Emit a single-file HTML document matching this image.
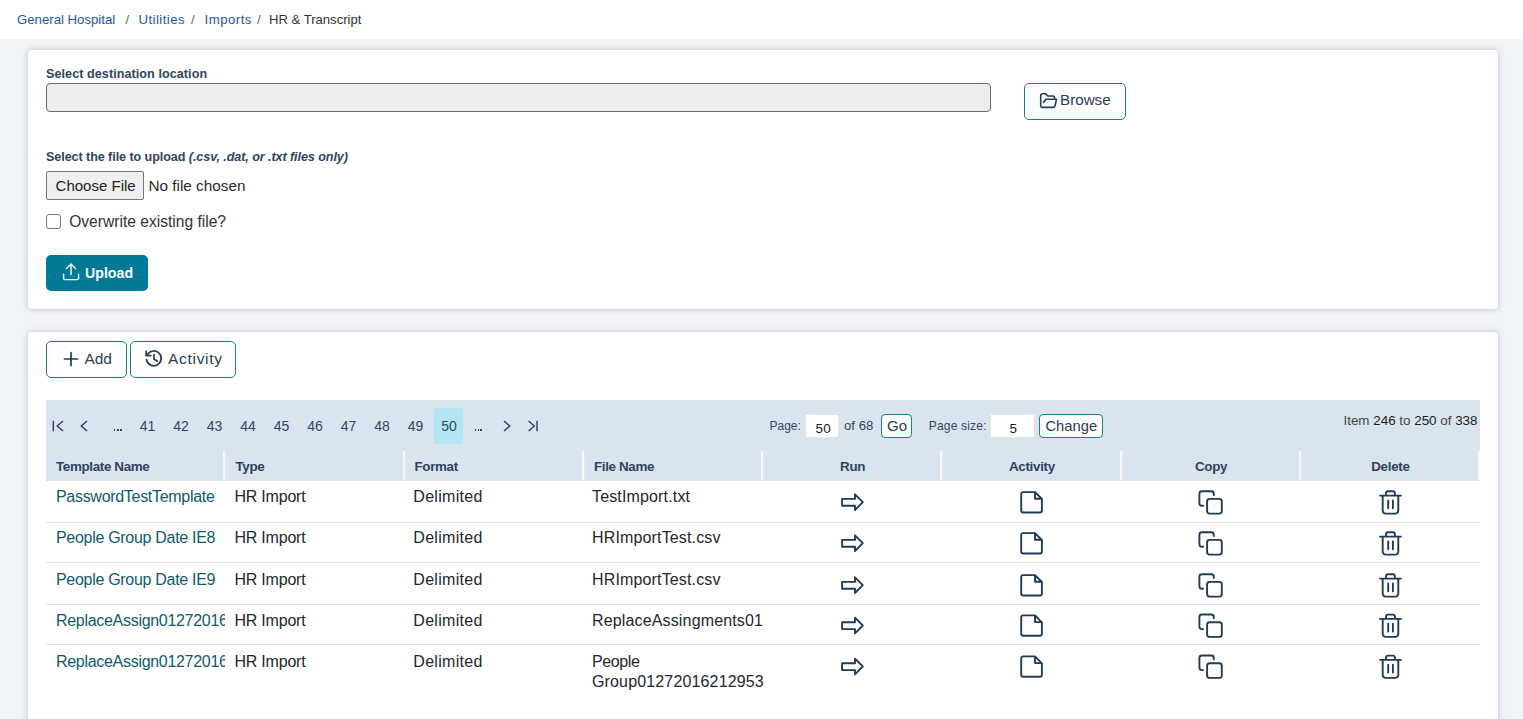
<!DOCTYPE html>
<html><head><meta charset="utf-8">
<style>
*{box-sizing:border-box;margin:0;padding:0}
html,body{width:1523px;height:719px;overflow:hidden;background:#f0f4f9;font-family:"Liberation Sans",sans-serif;color:#333}
.a{position:absolute}
.t{position:absolute;white-space:nowrap}
svg.ov{position:absolute;left:0;top:0;width:1523px;height:719px;overflow:visible}
</style></head><body>
<div class="a" style="left:0px;top:0px;width:1523px;height:39px;background:#fff"></div>
<div class="t" style="left:17px;top:11.51px;font-size:13.2px;line-height:15.84px;color:#1b58a2;font-weight:normal;font-style:normal;">General Hospital</div>
<div class="t" style="left:125.5px;top:11.51px;font-size:13.2px;line-height:15.84px;color:#666;font-weight:normal;font-style:normal;">/</div>
<div class="t" style="left:138.5px;top:11.51px;font-size:13.2px;line-height:15.84px;color:#1b58a2;font-weight:normal;font-style:normal;letter-spacing:0.45px">Utilities</div>
<div class="t" style="left:191px;top:11.51px;font-size:13.2px;line-height:15.84px;color:#666;font-weight:normal;font-style:normal;">/</div>
<div class="t" style="left:204.5px;top:11.51px;font-size:13.2px;line-height:15.84px;color:#1b58a2;font-weight:normal;font-style:normal;letter-spacing:0.5px">Imports</div>
<div class="t" style="left:257px;top:11.51px;font-size:13.2px;line-height:15.84px;color:#666;font-weight:normal;font-style:normal;">/</div>
<div class="t" style="left:269px;top:11.60px;font-size:13.1px;line-height:15.72px;color:#333;font-weight:normal;font-style:normal;">HR &amp; Transcript</div>
<div class="a" style="left:28px;top:50px;width:1470px;height:259px;background:#fff;border-radius:4px;box-shadow:0 0 6px rgba(0,0,0,.22)"></div>
<div class="t" style="left:46px;top:67.07px;font-size:12.6px;line-height:15.12px;color:#30465f;font-weight:bold;font-style:normal;letter-spacing:0.06px">Select destination location</div>
<div class="a" style="left:46px;top:83px;width:945px;height:29px;background:#ededed;border:1px solid #5f6f84;border-radius:4px"></div>
<div class="a" style="left:1024px;top:83px;width:102px;height:37px;background:#fff;border:1.3px solid #1b7d96;border-radius:5px"></div>
<div class="t" style="left:1060px;top:91.21px;font-size:15.2px;line-height:18.24px;color:#2c3d57;font-weight:normal;font-style:normal;">Browse</div>
<div class="t" style="left:46px;top:150.07px;font-size:12.6px;line-height:15.12px;color:#30465f;font-weight:bold;font-style:normal;letter-spacing:-0.08px">Select the file to upload <i>(.csv, .dat, or .txt files only)</i></div>
<div class="a" style="left:46px;top:171px;width:98px;height:29px;background:#efefef;border:1px solid #767676;border-radius:2px"></div>
<div class="t" style="left:55.6px;top:176.80px;font-size:15px;line-height:18.0px;color:#222;font-weight:normal;font-style:normal;">Choose File</div>
<div class="t" style="left:148.5px;top:176.52px;font-size:15.3px;line-height:18.36px;color:#2a2a2a;font-weight:normal;font-style:normal;">No file chosen</div>
<div class="a" style="left:46px;top:214px;width:15px;height:15px;background:#fff;border:1.2px solid #777;border-radius:3px"></div>
<div class="t" style="left:69.2px;top:213.23px;font-size:15.6px;line-height:18.72px;color:#333;font-weight:normal;font-style:normal;">Overwrite existing file?</div>
<div class="a" style="left:46px;top:255px;width:102px;height:36px;background:#027a97;border-radius:5px"></div>
<div class="t" style="left:85px;top:264.56px;font-size:14.2px;line-height:17.04px;color:#fff;font-weight:bold;font-style:normal;">Upload</div>
<div class="a" style="left:28px;top:332px;width:1470px;height:420px;background:#fff;border-radius:4px;box-shadow:0 0 6px rgba(0,0,0,.22)"></div>
<div class="a" style="left:46px;top:341px;width:81px;height:37px;background:#fff;border:1.3px solid #1b7d96;border-radius:5px"></div>
<div class="t" style="left:84.4px;top:350.33px;font-size:15.5px;line-height:18.6px;color:#2c3d57;font-weight:normal;font-style:normal;">Add</div>
<div class="a" style="left:130px;top:341px;width:106px;height:37px;background:#fff;border:1.3px solid #1b7d96;border-radius:5px"></div>
<div class="t" style="left:168px;top:350.33px;font-size:15.5px;line-height:18.6px;color:#2c3d57;font-weight:normal;font-style:normal;letter-spacing:0.7px">Activity</div>
<div class="a" style="left:46px;top:400px;width:1434px;height:80px;background:#d9e4ef"></div>
<div class="a" style="left:434px;top:408px;width:29px;height:36px;background:#b3e5f2;border-radius:2px"></div>
<div class="t" style="left:139.8px;top:417.75px;font-size:14px;line-height:16.8px;color:#34465f;font-weight:normal;font-style:normal;">41</div>
<div class="t" style="left:173.3px;top:417.75px;font-size:14px;line-height:16.8px;color:#34465f;font-weight:normal;font-style:normal;">42</div>
<div class="t" style="left:206.8px;top:417.75px;font-size:14px;line-height:16.8px;color:#34465f;font-weight:normal;font-style:normal;">43</div>
<div class="t" style="left:240.3px;top:417.75px;font-size:14px;line-height:16.8px;color:#34465f;font-weight:normal;font-style:normal;">44</div>
<div class="t" style="left:273.8px;top:417.75px;font-size:14px;line-height:16.8px;color:#34465f;font-weight:normal;font-style:normal;">45</div>
<div class="t" style="left:307.3px;top:417.75px;font-size:14px;line-height:16.8px;color:#34465f;font-weight:normal;font-style:normal;">46</div>
<div class="t" style="left:340.8px;top:417.75px;font-size:14px;line-height:16.8px;color:#34465f;font-weight:normal;font-style:normal;">47</div>
<div class="t" style="left:374.3px;top:417.75px;font-size:14px;line-height:16.8px;color:#34465f;font-weight:normal;font-style:normal;">48</div>
<div class="t" style="left:407.8px;top:417.75px;font-size:14px;line-height:16.8px;color:#34465f;font-weight:normal;font-style:normal;">49</div>
<div class="t" style="left:441.3px;top:417.75px;font-size:14px;line-height:16.8px;color:#34465f;font-weight:normal;font-style:normal;">50</div>
<div class="a" style="left:113.6px;top:429.3px;width:1.9px;height:2px;background:#34465f"></div>
<div class="a" style="left:116.8px;top:429.3px;width:1.9px;height:2px;background:#34465f"></div>
<div class="a" style="left:120.0px;top:429.3px;width:1.9px;height:2px;background:#34465f"></div>
<div class="a" style="left:474.6px;top:429.3px;width:1.9px;height:2px;background:#34465f"></div>
<div class="a" style="left:477.5px;top:429.3px;width:1.9px;height:2px;background:#34465f"></div>
<div class="a" style="left:480.4px;top:429.3px;width:1.9px;height:2px;background:#34465f"></div>
<div class="t" style="left:769.5px;top:419.34px;font-size:12px;line-height:14.4px;color:#34465f;font-weight:normal;font-style:normal;">Page:</div>
<div class="a" style="left:805px;top:414px;width:34px;height:24px;background:#fff;border:1px solid #e6e5e3"></div>
<div class="t" style="left:815.6px;top:421.32px;font-size:13.4px;line-height:16.08px;color:#1a1a1a;font-weight:normal;font-style:normal;letter-spacing:0.3px">50</div>
<div class="t" style="left:844px;top:418.21px;font-size:13.2px;line-height:15.84px;color:#34465f;font-weight:normal;font-style:normal;">of 68</div>
<div class="a" style="left:881px;top:414px;width:31px;height:24px;background:#fff;border:1.3px solid #1b7d96;border-radius:4px"></div>
<div class="t" style="left:887px;top:416.50px;font-size:15px;line-height:18.0px;color:#2c3d57;font-weight:normal;font-style:normal;">Go</div>
<div class="t" style="left:928.7px;top:419.25px;font-size:12.1px;line-height:14.52px;color:#34465f;font-weight:normal;font-style:normal;letter-spacing:0.15px">Page size:</div>
<div class="a" style="left:990px;top:414px;width:45px;height:24px;background:#fff;border:1px solid #e6e5e3"></div>
<div class="t" style="left:1009.5px;top:421.32px;font-size:13.4px;line-height:16.08px;color:#1a1a1a;font-weight:normal;font-style:normal;">5</div>
<div class="a" style="left:1039px;top:414px;width:64px;height:24px;background:#fff;border:1.3px solid #1b7d96;border-radius:4px"></div>
<div class="t" style="left:1045.4px;top:417.59px;font-size:14.8px;line-height:17.76px;color:#2c3d57;font-weight:normal;font-style:normal;">Change</div>
<div class="t" style="right:45.5px;text-align:right;top:413.12px;font-size:13.4px;line-height:16.08px;color:#444;font-weight:normal;">Item <span style="color:#222">246</span> to <span style="color:#222">250</span> of <span style="color:#222">338</span></div>
<div class="a" style="left:223px;top:451px;width:2px;height:29px;background:#f4f7fa"></div>
<div class="a" style="left:225px;top:451px;width:2px;height:29px;background:#e4e5e6"></div>
<div class="a" style="left:403px;top:451px;width:2px;height:29px;background:#f4f7fa"></div>
<div class="a" style="left:405px;top:451px;width:2px;height:29px;background:#e4e5e6"></div>
<div class="a" style="left:582px;top:451px;width:2px;height:29px;background:#f4f7fa"></div>
<div class="a" style="left:584px;top:451px;width:2px;height:29px;background:#e4e5e6"></div>
<div class="a" style="left:761px;top:451px;width:2px;height:29px;background:#f4f7fa"></div>
<div class="a" style="left:763px;top:451px;width:2px;height:29px;background:#e4e5e6"></div>
<div class="a" style="left:940px;top:451px;width:2px;height:29px;background:#f4f7fa"></div>
<div class="a" style="left:942px;top:451px;width:2px;height:29px;background:#e4e5e6"></div>
<div class="a" style="left:1120px;top:451px;width:2px;height:29px;background:#f4f7fa"></div>
<div class="a" style="left:1122px;top:451px;width:2px;height:29px;background:#e4e5e6"></div>
<div class="a" style="left:1299px;top:451px;width:2px;height:29px;background:#f4f7fa"></div>
<div class="a" style="left:1301px;top:451px;width:2px;height:29px;background:#e4e5e6"></div>
<div class="a" style="left:1478px;top:451px;width:2px;height:29px;background:#f4f7fa"></div>
<div class="a" style="left:46px;top:480px;width:1434px;height:1px;background:#e3e3e3"></div>
<div class="t" style="left:56px;top:459.32px;font-size:13.4px;line-height:16.08px;color:#2f4360;font-weight:bold;font-style:normal;letter-spacing:-0.35px">Template Name</div>
<div class="t" style="left:235.5px;top:459.32px;font-size:13.4px;line-height:16.08px;color:#2f4360;font-weight:bold;font-style:normal;letter-spacing:-0.35px">Type</div>
<div class="t" style="left:414.5px;top:459.32px;font-size:13.4px;line-height:16.08px;color:#2f4360;font-weight:bold;font-style:normal;letter-spacing:-0.35px">Format</div>
<div class="t" style="left:594px;top:459.32px;font-size:13.4px;line-height:16.08px;color:#2f4360;font-weight:bold;font-style:normal;letter-spacing:-0.35px">File Name</div>
<div class="t" style="left:752.6px;width:200px;text-align:center;top:459.32px;font-size:13.4px;line-height:16.08px;color:#2f4360;font-weight:bold;letter-spacing:-0.3px">Run</div>
<div class="t" style="left:931.9000000000001px;width:200px;text-align:center;top:459.32px;font-size:13.4px;line-height:16.08px;color:#2f4360;font-weight:bold;letter-spacing:-0.3px">Activity</div>
<div class="t" style="left:1111.1px;width:200px;text-align:center;top:459.32px;font-size:13.4px;line-height:16.08px;color:#2f4360;font-weight:bold;letter-spacing:-0.3px">Copy</div>
<div class="t" style="left:1290.4px;width:200px;text-align:center;top:459.32px;font-size:13.4px;line-height:16.08px;color:#2f4360;font-weight:bold;letter-spacing:-0.3px">Delete</div>
<div class="a" style="left:46px;top:522px;width:1434px;height:1px;background:#e3e3e3"></div>
<div class="a" style="left:46px;top:562px;width:1434px;height:1px;background:#e3e3e3"></div>
<div class="a" style="left:46px;top:604px;width:1434px;height:1px;background:#e3e3e3"></div>
<div class="a" style="left:46px;top:644px;width:1434px;height:1px;background:#e3e3e3"></div>
<div class="a" style="left:46px;top:482px;width:179px;height:30px;overflow:hidden"><div class="t" style="left:10px;top:4.86px;font-size:16px;line-height:19.2px;color:#0f5b6d;font-weight:normal;font-style:normal;letter-spacing:-0.3px">PasswordTestTemplate</div>
</div>
<div class="t" style="left:234.4px;top:486.86px;font-size:16px;line-height:19.2px;color:#23282d;font-weight:normal;font-style:normal;letter-spacing:-0.2px">HR Import</div>
<div class="t" style="left:413.3px;top:486.86px;font-size:16px;line-height:19.2px;color:#23282d;font-weight:normal;font-style:normal;letter-spacing:0.3px">Delimited</div>
<div class="a" style="left:583px;top:482px;width:180px;height:30px;overflow:hidden"><div class="t" style="left:9px;top:4.86px;font-size:16px;line-height:19.2px;color:#23282d;font-weight:normal;font-style:normal;letter-spacing:0.15px">TestImport.txt</div>
</div>
<div class="a" style="left:46px;top:523px;width:179px;height:30px;overflow:hidden"><div class="t" style="left:10px;top:4.86px;font-size:16px;line-height:19.2px;color:#0f5b6d;font-weight:normal;font-style:normal;letter-spacing:-0.3px">People Group Date IE8</div>
</div>
<div class="t" style="left:234.4px;top:527.86px;font-size:16px;line-height:19.2px;color:#23282d;font-weight:normal;font-style:normal;letter-spacing:-0.2px">HR Import</div>
<div class="t" style="left:413.3px;top:527.86px;font-size:16px;line-height:19.2px;color:#23282d;font-weight:normal;font-style:normal;letter-spacing:0.3px">Delimited</div>
<div class="a" style="left:583px;top:523px;width:180px;height:30px;overflow:hidden"><div class="t" style="left:9px;top:4.86px;font-size:16px;line-height:19.2px;color:#23282d;font-weight:normal;font-style:normal;letter-spacing:0.15px">HRImportTest.csv</div>
</div>
<div class="a" style="left:46px;top:565px;width:179px;height:30px;overflow:hidden"><div class="t" style="left:10px;top:4.86px;font-size:16px;line-height:19.2px;color:#0f5b6d;font-weight:normal;font-style:normal;letter-spacing:-0.3px">People Group Date IE9</div>
</div>
<div class="t" style="left:234.4px;top:569.86px;font-size:16px;line-height:19.2px;color:#23282d;font-weight:normal;font-style:normal;letter-spacing:-0.2px">HR Import</div>
<div class="t" style="left:413.3px;top:569.86px;font-size:16px;line-height:19.2px;color:#23282d;font-weight:normal;font-style:normal;letter-spacing:0.3px">Delimited</div>
<div class="a" style="left:583px;top:565px;width:180px;height:30px;overflow:hidden"><div class="t" style="left:9px;top:4.86px;font-size:16px;line-height:19.2px;color:#23282d;font-weight:normal;font-style:normal;letter-spacing:0.15px">HRImportTest.csv</div>
</div>
<div class="a" style="left:46px;top:606px;width:179px;height:30px;overflow:hidden"><div class="t" style="left:10px;top:4.86px;font-size:16px;line-height:19.2px;color:#0f5b6d;font-weight:normal;font-style:normal;letter-spacing:-0.3px">ReplaceAssign01272016212953</div>
</div>
<div class="t" style="left:234.4px;top:610.86px;font-size:16px;line-height:19.2px;color:#23282d;font-weight:normal;font-style:normal;letter-spacing:-0.2px">HR Import</div>
<div class="t" style="left:413.3px;top:610.86px;font-size:16px;line-height:19.2px;color:#23282d;font-weight:normal;font-style:normal;letter-spacing:0.3px">Delimited</div>
<div class="a" style="left:583px;top:606px;width:180px;height:30px;overflow:hidden"><div class="t" style="left:9px;top:4.86px;font-size:16px;line-height:19.2px;color:#23282d;font-weight:normal;font-style:normal;letter-spacing:0.15px">ReplaceAssingments01272016212953.csv</div>
</div>
<div class="a" style="left:46px;top:647px;width:179px;height:30px;overflow:hidden"><div class="t" style="left:10px;top:4.86px;font-size:16px;line-height:19.2px;color:#0f5b6d;font-weight:normal;font-style:normal;letter-spacing:-0.3px">ReplaceAssign01272016212953</div>
</div>
<div class="t" style="left:234.4px;top:651.86px;font-size:16px;line-height:19.2px;color:#23282d;font-weight:normal;font-style:normal;letter-spacing:-0.2px">HR Import</div>
<div class="t" style="left:413.3px;top:651.86px;font-size:16px;line-height:19.2px;color:#23282d;font-weight:normal;font-style:normal;letter-spacing:0.3px">Delimited</div>
<div class="a" style="left:583px;top:647px;width:184px;height:60px;overflow:hidden"><div class="t" style="left:9px;top:4.86px;font-size:16px;line-height:19.2px;color:#23282d;font-weight:normal;font-style:normal;letter-spacing:-0.4px">People</div>
<div class="t" style="left:9px;top:24.86px;font-size:16px;line-height:19.2px;color:#23282d;font-weight:normal;font-style:normal;letter-spacing:0.15px">Group01272016212953</div>
</div>
<svg class="ov" viewBox="0 0 1523 719" fill="none" stroke-linecap="round" stroke-linejoin="round">
<g stroke="#233b5b" stroke-width="1.6"><path d="M1043.5,102.5 L1045.8,99.2 H1056.5 L1055,106 A1.6,1.6 0 0 1 1053.4,107.4 H1042.5 A1.8,1.8 0 0 1 1040.7,105.6 V95.6 A1.8,1.8 0 0 1 1042.5,93.8 H1045.5 L1047.8,96 H1052.8 A1.8,1.8 0 0 1 1054.6,97.8 V99"/></g>
<g stroke="#fff" stroke-width="1.4"><path d="M63.6,274.2 V278.2 A1.4,1.4 0 0 0 65,279.6 H77.2 A1.4,1.4 0 0 0 78.6,278.2 V274.2"/><path d="M71,274.6 V264 M66.5,268.5 L71,264 L75.5,268.5"/></g>
<g stroke="#233b5b" stroke-width="1.7"><path d="M64.5,359 H77.5 M71,352.5 V365.5"/></g>
<g stroke="#233b5b" stroke-width="1.7"><path d="M147.4,354.6 A7.4,7.4 0 1 1 146.5,359.6"/><path d="M146.2,351 V355.6 H150.8"/><path d="M154,354.6 V359.3 L157.5,361.2"/></g>
<g stroke="#34465f" stroke-width="1.5" stroke-linecap="butt" stroke-linejoin="miter"><path d="M53.3,420.8 V431.2"/><path d="M63,421 L57.2,426 L63,431"/><path d="M87,421 L81.3,426 L87,431"/><path d="M504,421 L509.7,426 L504,431"/><path d="M528.6,421 L534.3,426 L528.6,431"/><path d="M537,420.8 V431.2"/></g>
<g transform="translate(0,0)" stroke="#233b5b" stroke-width="1.9">
<path d="M842.1,498.9 H855 V494.3 L862.8,502.2 L855,510 V505.8 H842.1 Z"/>
<path d="M1035,492.1 H1023.2 A2,2 0 0 0 1021.2,494.1 V510.5 A2,2 0 0 0 1023.2,512.5 H1039.9 A2,2 0 0 0 1041.9,510.5 V499 L1035,492.1 V498.8 H1041.9"/>
<path d="M1213.8,495 V493.7 A2.5,2.5 0 0 0 1211.3,491.2 H1201.9 A2.5,2.5 0 0 0 1199.4,493.7 V503.3 A2.5,2.5 0 0 0 1201.9,505.8 H1203.1"/>
<rect x="1207.1" y="498.9" width="14.7" height="14.7" rx="2.5"/>
<path d="M1380,495.6 H1400.9 M1386,495.6 V493.3 A2,2 0 0 1 1388,491.3 H1392.9 A2,2 0 0 1 1394.9,493.3 V495.6 M1382.7,495.6 V510.6 A3,3 0 0 0 1385.7,513.6 H1395.3 A3,3 0 0 0 1398.3,510.6 V495.6 M1388.2,500.5 V508.3 M1392.9,500.5 V508.3"/>
</g>
<g transform="translate(0,41)" stroke="#233b5b" stroke-width="1.9">
<path d="M842.1,498.9 H855 V494.3 L862.8,502.2 L855,510 V505.8 H842.1 Z"/>
<path d="M1035,492.1 H1023.2 A2,2 0 0 0 1021.2,494.1 V510.5 A2,2 0 0 0 1023.2,512.5 H1039.9 A2,2 0 0 0 1041.9,510.5 V499 L1035,492.1 V498.8 H1041.9"/>
<path d="M1213.8,495 V493.7 A2.5,2.5 0 0 0 1211.3,491.2 H1201.9 A2.5,2.5 0 0 0 1199.4,493.7 V503.3 A2.5,2.5 0 0 0 1201.9,505.8 H1203.1"/>
<rect x="1207.1" y="498.9" width="14.7" height="14.7" rx="2.5"/>
<path d="M1380,495.6 H1400.9 M1386,495.6 V493.3 A2,2 0 0 1 1388,491.3 H1392.9 A2,2 0 0 1 1394.9,493.3 V495.6 M1382.7,495.6 V510.6 A3,3 0 0 0 1385.7,513.6 H1395.3 A3,3 0 0 0 1398.3,510.6 V495.6 M1388.2,500.5 V508.3 M1392.9,500.5 V508.3"/>
</g>
<g transform="translate(0,83)" stroke="#233b5b" stroke-width="1.9">
<path d="M842.1,498.9 H855 V494.3 L862.8,502.2 L855,510 V505.8 H842.1 Z"/>
<path d="M1035,492.1 H1023.2 A2,2 0 0 0 1021.2,494.1 V510.5 A2,2 0 0 0 1023.2,512.5 H1039.9 A2,2 0 0 0 1041.9,510.5 V499 L1035,492.1 V498.8 H1041.9"/>
<path d="M1213.8,495 V493.7 A2.5,2.5 0 0 0 1211.3,491.2 H1201.9 A2.5,2.5 0 0 0 1199.4,493.7 V503.3 A2.5,2.5 0 0 0 1201.9,505.8 H1203.1"/>
<rect x="1207.1" y="498.9" width="14.7" height="14.7" rx="2.5"/>
<path d="M1380,495.6 H1400.9 M1386,495.6 V493.3 A2,2 0 0 1 1388,491.3 H1392.9 A2,2 0 0 1 1394.9,493.3 V495.6 M1382.7,495.6 V510.6 A3,3 0 0 0 1385.7,513.6 H1395.3 A3,3 0 0 0 1398.3,510.6 V495.6 M1388.2,500.5 V508.3 M1392.9,500.5 V508.3"/>
</g>
<g transform="translate(0,123.3)" stroke="#233b5b" stroke-width="1.9">
<path d="M842.1,498.9 H855 V494.3 L862.8,502.2 L855,510 V505.8 H842.1 Z"/>
<path d="M1035,492.1 H1023.2 A2,2 0 0 0 1021.2,494.1 V510.5 A2,2 0 0 0 1023.2,512.5 H1039.9 A2,2 0 0 0 1041.9,510.5 V499 L1035,492.1 V498.8 H1041.9"/>
<path d="M1213.8,495 V493.7 A2.5,2.5 0 0 0 1211.3,491.2 H1201.9 A2.5,2.5 0 0 0 1199.4,493.7 V503.3 A2.5,2.5 0 0 0 1201.9,505.8 H1203.1"/>
<rect x="1207.1" y="498.9" width="14.7" height="14.7" rx="2.5"/>
<path d="M1380,495.6 H1400.9 M1386,495.6 V493.3 A2,2 0 0 1 1388,491.3 H1392.9 A2,2 0 0 1 1394.9,493.3 V495.6 M1382.7,495.6 V510.6 A3,3 0 0 0 1385.7,513.6 H1395.3 A3,3 0 0 0 1398.3,510.6 V495.6 M1388.2,500.5 V508.3 M1392.9,500.5 V508.3"/>
</g>
<g transform="translate(0,164.3)" stroke="#233b5b" stroke-width="1.9">
<path d="M842.1,498.9 H855 V494.3 L862.8,502.2 L855,510 V505.8 H842.1 Z"/>
<path d="M1035,492.1 H1023.2 A2,2 0 0 0 1021.2,494.1 V510.5 A2,2 0 0 0 1023.2,512.5 H1039.9 A2,2 0 0 0 1041.9,510.5 V499 L1035,492.1 V498.8 H1041.9"/>
<path d="M1213.8,495 V493.7 A2.5,2.5 0 0 0 1211.3,491.2 H1201.9 A2.5,2.5 0 0 0 1199.4,493.7 V503.3 A2.5,2.5 0 0 0 1201.9,505.8 H1203.1"/>
<rect x="1207.1" y="498.9" width="14.7" height="14.7" rx="2.5"/>
<path d="M1380,495.6 H1400.9 M1386,495.6 V493.3 A2,2 0 0 1 1388,491.3 H1392.9 A2,2 0 0 1 1394.9,493.3 V495.6 M1382.7,495.6 V510.6 A3,3 0 0 0 1385.7,513.6 H1395.3 A3,3 0 0 0 1398.3,510.6 V495.6 M1388.2,500.5 V508.3 M1392.9,500.5 V508.3"/>
</g>
</svg>
</body></html>
